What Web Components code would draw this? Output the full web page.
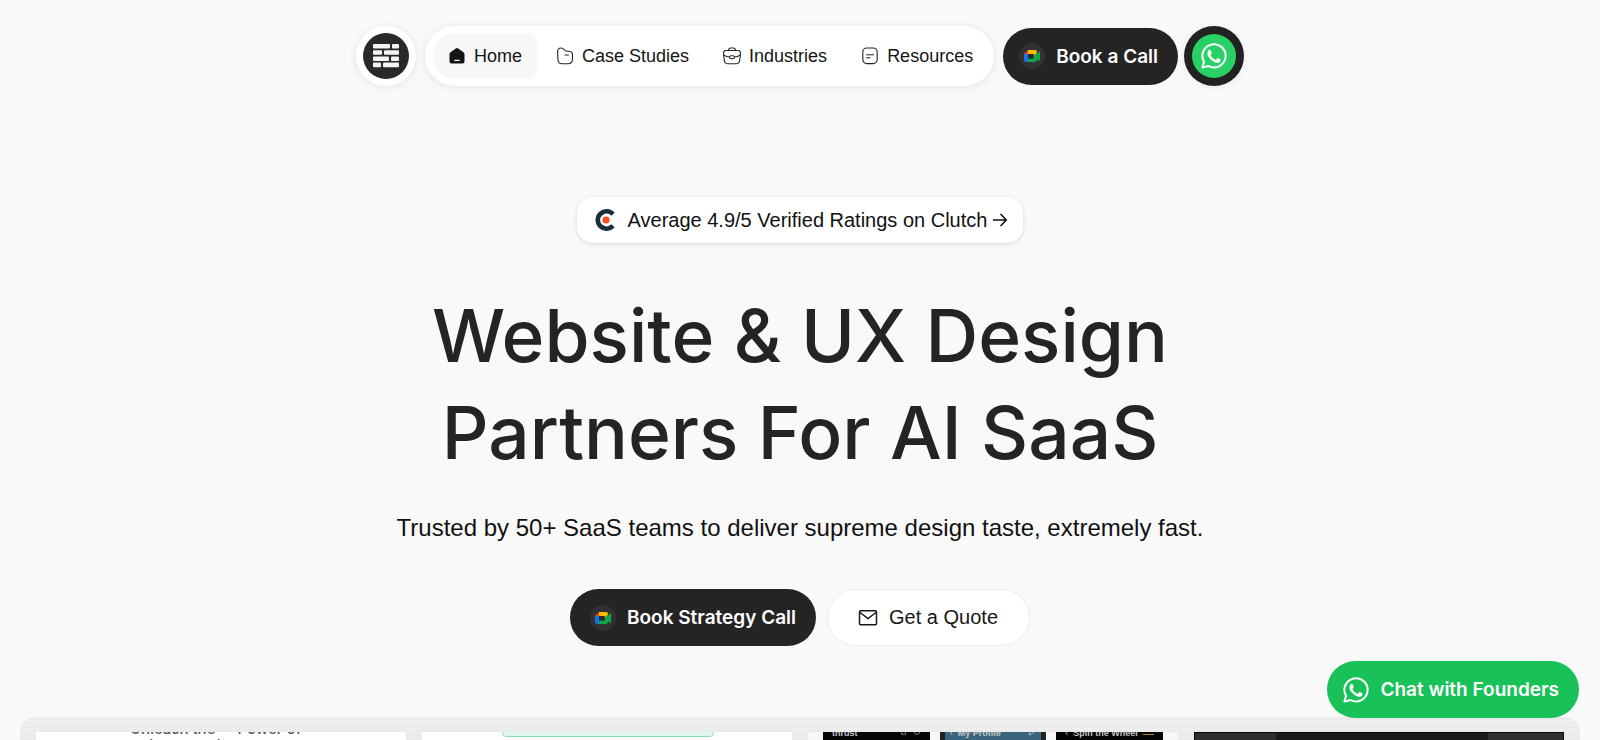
<!DOCTYPE html>
<html lang="en">
<head>
<meta charset="utf-8">
<title>Website &amp; UX Design Partners For AI SaaS</title>
<style>
  body {
    margin: 0;
    height: 100vh;
    overflow: hidden;
    background: #f9f9f9;
    color: #111;
    font-family: "Liberation Sans", Arial, sans-serif;
  }
</style>
</head>
<body>
<landing-page></landing-page>

<script>
const define = (name, html) => {
  const template = document.createElement("template");
  template.innerHTML = html;
  customElements.define(name, class extends HTMLElement {
    constructor() {
      super();
      this.attachShadow({ mode: "open" });
      this.shadowRoot.appendChild(template.content.cloneNode(true));
    }
  });
};

const icons = {
  bricks: `<svg viewBox="0 0 28 24"><g fill="#f4f4f4">
    <rect x="1" y="0" width="17" height="4.600" rx="1"/><rect x="20" y="0" width="7" height="4.600" rx="1"/>
    <rect x="1" y="6.200" width="9" height="4.600" rx="1"/><rect x="12" y="6.200" width="15" height="4.600" rx="1"/>
    <rect x="1" y="12.400" width="16" height="4.600" rx="1"/><rect x="19" y="12.400" width="8" height="4.600" rx="1"/>
    <rect x="1" y="18.600" width="8" height="4.600" rx="1"/><rect x="11" y="18.600" width="16" height="4.600" rx="1"/></g></svg>`,
  home: `<svg viewBox="0 0 18 18"><path fill="#151515" d="M9 1Q9.600 1 10.200 1.500L15.500 5.200Q16.500 6 16.500 7.200V14.500Q16.500 16.500 14.500 16.500H3.500Q1.500 16.500 1.500 14.500V7.200Q1.500 6 2.500 5.200L7.800 1.500Q8.400 1 9 1Z"/><path stroke="#fff" stroke-width="1.200" stroke-linecap="round" d="M6.700 13.300H11.300"/></svg>`,
  folder: `<svg viewBox="0 0 18 18"><path fill="none" stroke="#222" stroke-width="1.100" stroke-linejoin="round" d="M2 13L1.600 5Q1.500 1 5 1Q7 1 8 2.500Q9 4 11 4.200H13Q16.500 4.500 16.500 8V12Q16.500 16.700 12 16.700H6Q2.500 16.700 2 13Z"/><path stroke="#222" stroke-linecap="round" d="M9 8H12.500"/></svg>`,
  briefcase: `<svg viewBox="0 0 18 18"><g fill="none" stroke="#222" stroke-width="1.100"><path d="M3.500 3.500H14.500Q17.700 3.500 17.500 6.500L16.700 13.500Q16.300 16.800 13 16.800H5Q1.700 16.800 1.300 13.500L.5 6.500Q.3 3.500 3.500 3.500Z"/><path d="M5.500 3.500Q5.700 1 7.500 1H10.500Q12.300 1 12.500 3.500M.7 8Q3.500 9.900 6.500 10M17.300 8Q14.500 9.900 11.500 10"/><rect x="6.500" y="8.700" width="5" height="3" rx="1.500"/></g></svg>`,
  note: `<svg viewBox="0 0 18 18"><rect x="1.800" y="1" width="14.400" height="15.600" rx="4" fill="none" stroke="#222" stroke-width="1.100"/><path stroke="#222" stroke-linecap="round" d="M5.500 7.800H12.500M5.500 10.800H9.200"/></svg>`,
  meet: `<svg viewBox="0 0 26 26"><circle cx="13" cy="13" r="13" fill="#303132"/><path fill="#f0442f" d="M5 11L9 7V11Z"/><path fill="#ffba00" d="M9 7H16Q18 7 18 9V10L14.500 13V11H9Z"/><path fill="#1a73e8" d="M5 11H9V15.500V19H7Q5 19 5 17Z"/><path fill="#10a64a" d="M9 15.500H14.500V13L18 10V17Q18 19 16 19H9Z"/><path fill="#10a64a" d="M16.500 12.500L20 8.500Q21 8 21 9V17.500Q21 18.500 20 17.800L16.500 14.500Z"/><path fill="#252b30" d="M9 11H14.500V15.500H9Z"/></svg>`,
  whatsapp: `<svg viewBox="0 0 26 26"><path fill="none" stroke="#fff" stroke-width="2" stroke-linejoin="round" d="M1.400 24.600L3 18.700A11.600 11.600 0 1 1 7.400 23Z"/><path fill="#fff" d="M8.500 6.700Q9.300 6.500 9.700 7.400L10.700 9.700Q10.900 10.300 9.700 11.700Q9.300 12.100 9.700 12.700Q11.400 15.500 14.300 16.700Q14.900 17 15.300 16.500Q16.400 15 16.800 15.100L19.300 16.300Q19.800 16.600 19.600 17.500Q19 19.700 16.300 19.900Q13.600 19.900 9.900 16.600Q6.300 13.100 6.400 10.200Q6.500 7.300 8.500 6.700Z"/></svg>`,
  clutch: `<svg viewBox="0 0 22 22"><path fill="none" stroke="#17313b" stroke-width="4.600" d="M19 5.200A8.700 8.700 0 1 0 19 16.800"/><circle cx="12" cy="11" r="3.600" fill="#f2511b"/></svg>`,
  arrow: `<svg viewBox="0 0 16 16"><path fill="none" stroke="#111" stroke-width="1.600" d="M1 8H14M8.500 2L14.300 8L8.500 14"/></svg>`,
  mail: `<svg viewBox="0 0 20 18"><rect x="1.500" y="1.800" width="17" height="14" rx="1.200" fill="none" stroke="#171717" stroke-width="1.500"/><path fill="none" stroke="#171717" stroke-width="1.500" d="M2 3.500L10 9.500L18 3.500"/></svg>`,
  search: `<svg viewBox="0 0 10 10"><path fill="none" stroke="#999" d="M2 1V8H7V1"/></svg>`,
  ring: `<svg viewBox="0 0 10 10"><circle cx="5" cy="4.500" r="3.500" fill="none" stroke="#999"/></svg>`,
  edit: `<svg viewBox="0 0 10 10"><path fill="none" stroke="#ccc" d="M2 9V6L7 1L9 3L4 8H2"/></svg>`
};

class SiteIcon extends HTMLElement {
  constructor() {
    super();
    this.attachShadow({ mode: "open" });
  }

  connectedCallback() {
    this.shadowRoot.innerHTML = `
      <style>
        :host { display: block; flex: none; width: 18px; height: 18px; }
        svg { display: block; width: 100%; height: 100%; }
      </style>
      ${icons[this.getAttribute("name")]}`;
    this.shadowRoot.querySelector("svg").setAttribute("aria-hidden", "true");
  }
}
customElements.define("site-icon", SiteIcon);

define("nav-item", `
  <style>
    :host { display: flex; }
    a {
      display: flex;
      align-items: center;
      gap: 8px;
      padding: 0 15px;
      height: 46px;
      color: #151515;
      font-size: 18px;
      text-decoration: none;
      white-space: nowrap;
    }
    :host([active]) a { background: #f7f7f7; border-radius: 22px 8px 8px 22px; }
  </style>
  <a href="#"><slot name="icon"></slot><slot></slot></a>
`);

define("pill-button", `
  <style>
    :host { display: flex; }
    button {
      display: flex;
      align-items: center;
      gap: 11px;
      height: 57px;
      padding: 0 20px 0 16px;
      border: 0;
      border-radius: 30px;
      background: #242424;
      color: #fff;
      font: 600 19px Inter, "Liberation Sans", sans-serif;
      white-space: nowrap;
      cursor: pointer;
    }
    :host([wide]) button { padding: 0 20px; }
    :host([light]) button {
      padding: 0 31px 0 30px;
      border: 1px solid #ececec;
      background: #fff;
      color: #171717;
      font: 20px "Liberation Sans", Arial, sans-serif;
    }
    :host([green]) button { background: #19c258; }
  </style>
  <button type="button"><slot name="icon"></slot><slot></slot></button>
`);

define("site-header", `
  <style>
    :host {
      display: flex;
      justify-content: center;
      align-items: center;
      padding-top: 26px;
    }
    .logo, .chat {
      display: flex;
      align-items: center;
      justify-content: center;
      width: 60px;
      height: 60px;
      border-radius: 50%;
    }
    .logo { background: #fff; margin-right: 9px; box-shadow: 0 1px 8px rgba(0, 0, 0, .09); }
    .chat { background: #222; margin-left: 6px; box-shadow: 0 1px 8px rgba(0, 0, 0, .06); }
    span {
      display: flex;
      align-items: center;
      justify-content: center;
      width: 46px;
      height: 46px;
      border-radius: 50%;
      background: #292929;
    }
    .chat span { width: 44px; height: 44px; background: #28d065; }
    .logo site-icon { width: 28px; height: 24px; }
    .chat site-icon, pill-button site-icon { width: 26px; height: 26px; }
    nav {
      display: flex;
      align-items: center;
      gap: 4px;
      height: 60px;
      padding: 0 6px 0 8px;
      margin-right: 9px;
      box-sizing: border-box;
      border-radius: 30px;
      background: #fff;
      box-shadow: 0 1px 8px rgba(0, 0, 0, .09);
    }
  </style>
  <a class="logo" href="#" aria-label="Homepage"><span><site-icon name="bricks"></site-icon></span></a>
  <nav>
    <nav-item active><site-icon slot="icon" name="home"></site-icon>Home</nav-item>
    <nav-item><site-icon slot="icon" name="folder"></site-icon>Case Studies</nav-item>
    <nav-item><site-icon slot="icon" name="briefcase"></site-icon>Industries</nav-item>
    <nav-item><site-icon slot="icon" name="note"></site-icon>Resources</nav-item>
  </nav>
  <pill-button><site-icon slot="icon" name="meet"></site-icon>Book a Call</pill-button>
  <a class="chat" href="#" aria-label="WhatsApp"><span><site-icon name="whatsapp"></site-icon></span></a>
`);

define("hero-section", `
  <style>
    :host {
      display: flex;
      flex-direction: column;
      align-items: center;
      padding: 111px 20px 71px;
      text-align: center;
    }
    .rating {
      display: flex;
      align-items: center;
      height: 46px;
      padding: 0 15px 0 17px;
      border-radius: 16px;
      background: #fff;
      box-shadow: 0 1px 4px rgba(0, 0, 0, .14);
      color: #111;
      font-size: 20px;
      text-decoration: none;
    }
    .rating site-icon { width: 22px; height: 22px; margin-right: 12px; }
    .rating site-icon.arrow { width: 16px; height: 16px; margin: 0 0 0 5px; }
    h1 {
      max-width: 800px;
      margin: 44px 0 0;
      color: #242424;
      font-family: Inter, "Liberation Sans", sans-serif;
      font-size: 73px;
      font-weight: 500;
      line-height: 97px;
    }
    p { margin: 31px 0 0; font-size: 24px; line-height: 32px; }
    .actions { display: flex; gap: 11px; margin-top: 45px; }
    .actions site-icon { width: 26px; height: 26px; }
    .actions site-icon.mail { width: 20px; height: 18px; }
  </style>
  <a class="rating" href="#">
    <site-icon name="clutch"></site-icon>
    Average 4.9/5 Verified Ratings on Clutch
    <site-icon class="arrow" name="arrow"></site-icon>
  </a>
  <h1>Website &amp; UX Design Partners For AI SaaS</h1>
  <p>Trusted by 50+ SaaS teams to deliver supreme design taste, extremely fast.</p>
  <div class="actions">
    <pill-button wide><site-icon slot="icon" name="meet"></site-icon>Book Strategy Call</pill-button>
    <pill-button light><site-icon slot="icon" class="mail" name="mail"></site-icon>Get a Quote</pill-button>
  </div>
`);

define("work-gallery", `
  <style>
    :host {
      display: grid;
      grid-template-columns: repeat(4, 1fr);
      gap: 16px;
      box-sizing: border-box;
      margin: 0 20px;
      padding: 15px 16px 0;
      border-radius: 16px 16px 0 0;
      background: radial-gradient(circle, #e8e8e8 1px, #ededed 1px) 0 0 / 4px 4px;
    }
    article { min-width: 0; overflow: hidden; background: #fff; }
    .copy {
      margin: -12px 0 0 94px;
      color: #555;
      font-family: Inter, "Liberation Sans", sans-serif;
      font-size: 15px;
      font-weight: 500;
      line-height: 17px;
    }
    .copy span { margin-left: 18px; }
    .field {
      box-sizing: border-box;
      width: 212px;
      height: 24px;
      margin: -19px 0 0 80px;
      border: 1px solid #8fd8b5;
      border-radius: 4px;
      background: #e4f6f0;
    }
    .phones {
      display: grid;
      grid-template-columns: repeat(3, 1fr);
      gap: 10px;
      padding: 0 15px;
      background: #f6f6f6;
    }
    .phone {
      display: flex;
      gap: 5px;
      height: 200px;
      box-sizing: border-box;
      padding: 0 9px;
      overflow: hidden;
      background: #050505;
      color: #c4c4c4;
      font-size: 9px;
      line-height: 10px;
      white-space: nowrap;
    }
    .phone * { margin-top: -4px; }
    .phone b { flex: 1; }
    .phone site-icon { width: 8px; height: 8px; }
    .phone i { width: 20px; height: 6px; border-bottom: 1px solid #b97a2b; }
    .profile { background: #3b647e; border: solid #222; border-width: 0 5px; padding: 0 5px; }
    .app { display: grid; grid-template-columns: 81px 1fr 75px; background: #1a1a1a; border: solid #080808; border-width: 1px 1px 0; }
    .app div { background: #2e2e2e; }
    .app div + div { background: #1a1a1a; }
    .app div:last-child { background: #303030; }
  </style>
  <article><div class="copy">Unleash the <span>Power of</span><br>Using Electric Flow</div></article>
  <article><div class="field"></div></article>
  <article class="phones">
    <div class="phone"><b>thrust</b><site-icon name="search"></site-icon><site-icon name="ring"></site-icon></div>
    <div class="phone profile"><span>‹</span><b>My Profile</b><site-icon name="edit"></site-icon></div>
    <div class="phone"><span>‹</span><b>Spin the Wheel</b><i></i></div>
  </article>
  <article class="app"><div></div><div></div><div></div></article>
`);

define("landing-page", `
  <style>
    :host { display: flex; flex-direction: column; height: 100%; }
    site-header, hero-section { flex: none; }
    work-gallery { flex: 1; min-height: 0; overflow: hidden; }
    .founders { position: fixed; right: 21px; bottom: 22px; }
    .founders site-icon { width: 26px; height: 26px; }
  </style>
  <site-header></site-header>
  <hero-section></hero-section>
  <work-gallery></work-gallery>
  <pill-button green class="founders"><site-icon slot="icon" name="whatsapp"></site-icon>Chat with Founders</pill-button>
`);
</script>
</body>
</html>
